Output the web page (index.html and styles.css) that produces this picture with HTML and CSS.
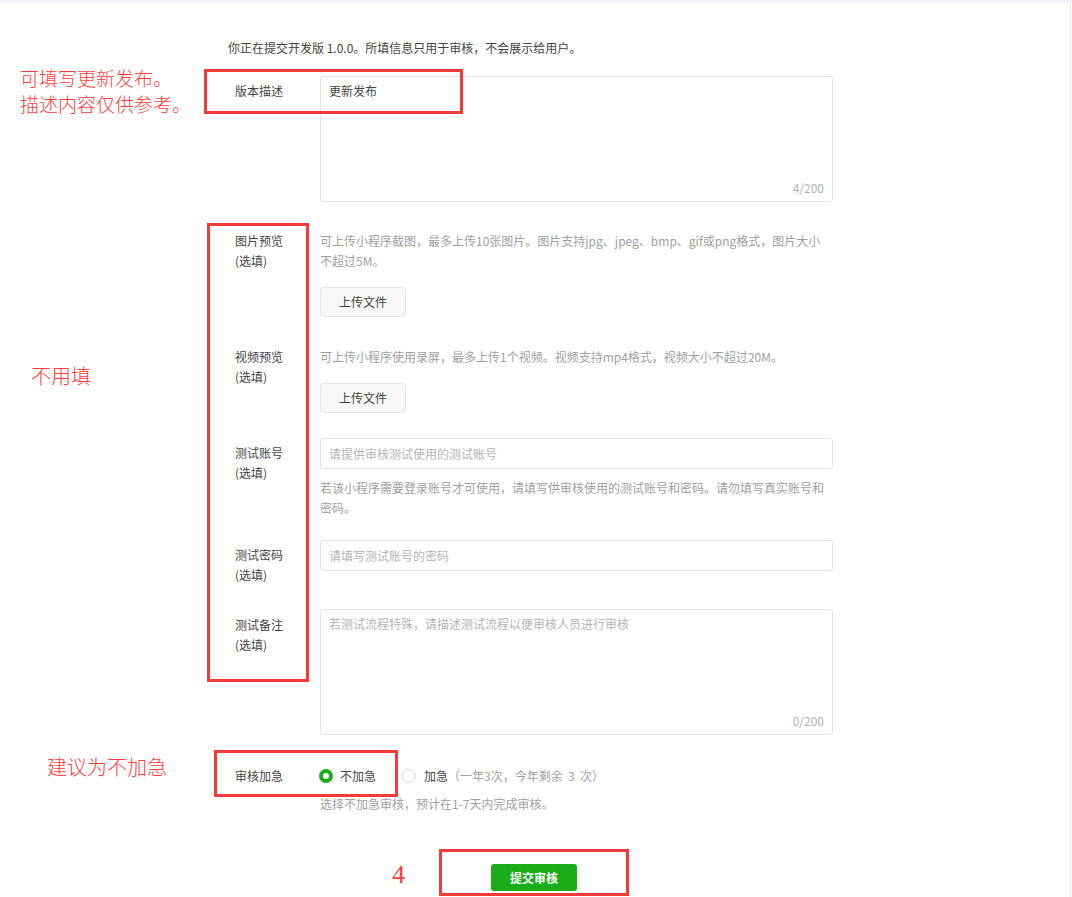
FILE: index.html
```html
<!DOCTYPE html>
<html lang="zh-CN">
<head>
<meta charset="utf-8">
<title>提交审核</title>
<link rel="stylesheet" href="styles.css">
</head>
<body>
<div class="topbar"></div>
<div class="page">
  <p class="intro">你正在提交开发版 1.0.0。所填信息只用于审核，不会展示给用户。</p>
  <div class="form">
    <div class="row r1">
      <div class="label pad">版本描述</div>
      <div class="ctrl">
        <div class="textarea">
          <span class="val">更新发布</span>
          <span class="count">4/200</span>
        </div>
      </div>
    </div>
    <div class="row r2">
      <div class="label">图片预览<br>(选填)</div>
      <div class="ctrl">
        <p class="desc">可上传小程序截图，最多上传10张图片。图片支持jpg、jpeg、bmp、gif或png格式，图片大小<br>不超过5M。</p>
        <button class="btn">上传文件</button>
      </div>
    </div>
    <div class="row r3">
      <div class="label">视频预览<br>(选填)</div>
      <div class="ctrl">
        <p class="desc">可上传小程序使用录屏，最多上传1个视频。视频支持mp4格式，视频大小不超过20M。</p>
        <button class="btn">上传文件</button>
      </div>
    </div>
    <div class="row r4">
      <div class="label pad">测试账号<br>(选填)</div>
      <div class="ctrl">
        <div class="input"><span class="ph">请提供审核测试使用的测试账号</span></div>
        <p class="desc help">若该小程序需要登录账号才可使用，请填写供审核使用的测试账号和密码。请勿填写真实账号和密码。</p>
      </div>
    </div>
    <div class="row r5">
      <div class="label pad">测试密码<br>(选填)</div>
      <div class="ctrl">
        <div class="input"><span class="ph">请填写测试账号的密码</span></div>
      </div>
    </div>
    <div class="row r6">
      <div class="label pad2">测试备注<br>(选填)</div>
      <div class="ctrl">
        <div class="textarea">
          <span class="ph">若测试流程特殊，请描述测试流程以便审核人员进行审核</span>
          <span class="count">0/200</span>
        </div>
      </div>
    </div>
    <div class="row r7">
      <div class="label">审核加急</div>
      <div class="ctrl">
        <div class="radios">
          <span class="radio on"></span><span class="rtext">不加急</span>
          <span class="radio off"></span><span class="rtext">加急</span><span class="rnote">（一年3次，今年剩余&nbsp;&nbsp;3&nbsp;&nbsp;次）</span>
        </div>
        <p class="desc">选择不加急审核，预计在1-7天内完成审核。</p>
      </div>
    </div>
    <div class="submit-wrap">
      <button class="btn-primary">提交审核</button>
    </div>
  </div>
</div>

<div class="note note1">可填写更新发布。<br>描述内容仅供参考。</div>
<div class="mark box1"></div>
<div class="note note2">不用填</div>
<div class="mark box2"></div>
<div class="note note3">建议为不加急</div>
<div class="mark box3"></div>
<div class="note note4">4</div>
<div class="mark box4"></div>
</body>
</html>
```
FILE: styles.css
```css
* { box-sizing: border-box; }

html, body {
  margin: 0;
  padding: 0;
  background: #ffffff;
}

body {
  position: relative;
  width: 1072px;
  height: 897px;
  overflow: hidden;
  font-family: "Noto Sans CJK SC", "Microsoft YaHei", "Liberation Sans", sans-serif;
  font-size: 12px;
  line-height: 20px;
  color: #444444;
}

.topbar {
  height: 3px;
  background: #f3f4f7;
}

.page {
  width: 1071px;
  height: 894px;
  border-right: 1px solid #e8e9ec;
  padding-top: 35px;
}

.intro {
  margin: 0 0 18px 228px;
  color: #444444;
}

.form {
  margin-left: 235px;
  width: 598px;
}

.row {
  display: grid;
  grid-template-columns: 85px 513px;
}

.r2 { margin-top: 29px; }
.r3 { margin-top: 30px; }
.r4 { margin-top: 25px; }
.r5 { margin-top: 22px; }
.r6 { margin-top: 24px; }
.r7 { margin-top: 31px; }

.label {
  color: #444444;
}
.label.pad { padding-top: 5px; }
.label.pad2 { padding-top: 6px; }

.ctrl {
  display: flex;
  flex-direction: column;
  align-items: flex-start;
}

.textarea {
  width: 513px;
  height: 126px;
  border: 1px solid #e2e4e7;
  border-radius: 3px;
  padding: 4px 8px 3px 8px;
  display: flex;
  flex-direction: column;
  justify-content: space-between;
}

.val { color: #444444; }

.ph { color: #b5b5b5; }

.count {
  align-self: flex-end;
  color: #b2b2b2;
}

.desc {
  margin: 0;
  color: #9f9f9f;
}

.help { margin-top: 9px; }

.btn {
  margin-top: 16px;
  width: 86px;
  height: 30px;
  padding: 0;
  border: 1px solid #e4e6e9;
  border-radius: 3px;
  background: #f7f7f7;
  color: #444444;
  font-family: inherit;
  font-size: 12px;
  line-height: 28px;
}

.input {
  width: 513px;
  height: 31px;
  border: 1px solid #e2e4e7;
  border-radius: 3px;
  padding: 4px 8px;
  line-height: 21px;
}

.radios {
  display: flex;
  align-items: center;
  height: 20px;
}

.radio {
  width: 14px;
  height: 14px;
  border-radius: 50%;
  flex: none;
}
.radio.on {
  border: 4px solid #1aad19;
  background: #ffffff;
  margin-left: -1px;
}
.radio.off {
  border: 1px solid #d9dbde;
  background: #ffffff;
  margin-left: 26px;
}

.rtext {
  margin-left: 7px;
  color: #444444;
}
.radio.off + .rtext { margin-left: 8px; }

.rnote { color: #9f9f9f; }

.r7 .desc { margin-top: 8px; }

.submit-wrap {
  display: flex;
  justify-content: center;
  margin-top: 50px;
}

.btn-primary {
  width: 86px;
  height: 27px;
  padding: 0;
  border: none;
  border-radius: 3px;
  background: #1aad19;
  color: #ffffff;
  font-family: inherit;
  font-size: 12px;
  font-weight: 700;
  line-height: 27px;
}

/* annotation overlay */
.note {
  position: absolute;
  color: #ff3d3d;
  font-family: "Noto Sans CJK SC", sans-serif;
  font-weight: 300;
  white-space: nowrap;
}

.note1 {
  left: 20px;
  top: 65px;
  font-size: 19px;
  line-height: 26px;
}
.note2 {
  left: 31px;
  top: 363px;
  font-size: 20px;
  line-height: 26px;
}
.note3 {
  left: 47px;
  top: 754px;
  font-size: 20px;
  line-height: 26px;
}
.note4 {
  left: 392px;
  top: 860px;
  font-family: "Liberation Serif", serif;
  font-size: 26px;
  line-height: 30px;
}

.mark {
  position: absolute;
  border: 3px solid #f43a3a;
}
.box1 { left: 204px; top: 69px; width: 259px; height: 45px; }
.box2 { left: 207px; top: 223px; width: 102px; height: 459px; }
.box3 { left: 214px; top: 750px; width: 184px; height: 47px; }
.box4 { left: 439px; top: 849px; width: 190px; height: 47px; }
```
